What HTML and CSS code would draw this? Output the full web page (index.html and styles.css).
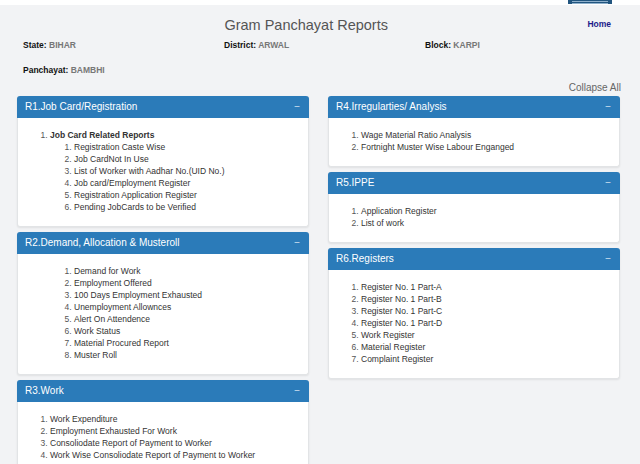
FILE: index.html
```html
<!DOCTYPE html>
<html lang="en">
<head>
    <meta charset="UTF-8">
    <meta name="viewport" content="width=device-width, initial-scale=1.0">
    <title>Gram Panchayat Reports</title>
    <link rel="stylesheet" href="styles.css">
</head>
<body>
    <!-- faixa do topo com o logo -->
    <div class="topbar">
        <div class="toplogo"><span></span><span></span></div>
    </div>

    <div class="container">
        <div class="header">
            <h1>Gram Panchayat Reports</h1>
            <a href="#" class="home">Home</a>
        </div>

        <div class="info">
            <div><b>State:</b> <span>BIHAR</span></div>
            <div><b>District:</b> <span>ARWAL</span></div>
            <div><b>Block:</b> <span>KARPI</span></div>
            <div><b>Panchayat:</b> <span>BAMBHI</span></div>
        </div>

        <div class="collapse-all">Collapse All</div>

        <div class="columns">
            <div class="col">
                <div class="panel">
                    <div class="panel-heading">R1.Job Card/Registration <span class="toggle">&minus;</span></div>
                    <div class="panel-body">
                        <ol>
                            <li><b>Job Card Related Reports</b>
                                <ol>
                                    <li>Registration Caste Wise</li>
                                    <li>Job CardNot In Use</li>
                                    <li>List of Worker with Aadhar No.(UID No.)</li>
                                    <li>Job card/Employment Register</li>
                                    <li>Registration Application Register</li>
                                    <li>Pending JobCards to be Verified</li>
                                </ol>
                            </li>
                        </ol>
                    </div>
                </div>

                <div class="panel">
                    <div class="panel-heading">R2.Demand, Allocation &amp; Musteroll <span class="toggle">&minus;</span></div>
                    <div class="panel-body">
                        <ol class="deep">
                            <li>Demand for Work</li>
                            <li>Employment Offered</li>
                            <li>100 Days Employment Exhausted</li>
                            <li>Unemployment Allownces</li>
                            <li>Alert On Attendence</li>
                            <li>Work Status</li>
                            <li>Material Procured Report</li>
                            <li>Muster Roll</li>
                        </ol>
                    </div>
                </div>

                <div class="panel">
                    <div class="panel-heading">R3.Work <span class="toggle">&minus;</span></div>
                    <div class="panel-body">
                        <ol>
                            <li>Work Expenditure</li>
                            <li>Employment Exhausted For Work</li>
                            <li>Consoliodate Report of Payment to Worker</li>
                            <li>Work Wise Consoliodate Report of Payment to Worker</li>
                        </ol>
                    </div>
                </div>
            </div>

            <div class="col">
                <div class="panel">
                    <div class="panel-heading">R4.Irregularties/ Analysis <span class="toggle">&minus;</span></div>
                    <div class="panel-body">
                        <ol>
                            <li>Wage Material Ratio Analysis</li>
                            <li>Fortnight Muster Wise Labour Enganged</li>
                        </ol>
                    </div>
                </div>

                <div class="panel">
                    <div class="panel-heading">R5.IPPE <span class="toggle">&minus;</span></div>
                    <div class="panel-body">
                        <ol>
                            <li>Application Register</li>
                            <li>List of work</li>
                        </ol>
                    </div>
                </div>

                <div class="panel">
                    <div class="panel-heading">R6.Registers <span class="toggle">&minus;</span></div>
                    <div class="panel-body">
                        <ol>
                            <li>Register No. 1 Part-A</li>
                            <li>Register No. 1 Part-B</li>
                            <li>Register No. 1 Part-C</li>
                            <li>Register No. 1 Part-D</li>
                            <li>Work Register</li>
                            <li>Material Register</li>
                            <li>Complaint Register</li>
                        </ol>
                    </div>
                </div>
            </div>
        </div>
    </div>
</body>
</html>
```

FILE: styles.css
```css
/* Estilos da pagina de relatorios */
body {
    margin: 0;
    padding: 0;
    background-color: #f2f3f5;
    font-family: "Liberation Sans", Arial, sans-serif;
    color: #333;
}

.topbar {
    height: 5px;
    background: #fff;
    display: flex;
    justify-content: flex-end;
    padding-right: 28px;
}

.toplogo {
    width: 44px;
    height: 4px;
    background: #22557f;
    display: flex;
    flex-direction: column;
    justify-content: space-around;
    padding: 0 4px;
    box-sizing: border-box;
}

.toplogo span {
    display: block;
    height: 1px;
    background: #8fb0cc;
}

.container {
    width: 603px;
    margin-left: 17px;
}

.header {
    display: flex;
    align-items: flex-start;
    margin-top: 11px;
}

h1 {
    flex: 1;
    margin: 0;
    padding-left: 8px;
    text-align: center;
    font-size: 14.5px;
    line-height: 18px;
    font-weight: normal;
    color: #555;
}

.home {
    margin: 2px 9px 0 0;
    font-size: 8.5px;
    line-height: 12px;
    font-weight: bold;
    color: #1b1b8a;
    text-decoration: none;
}

.info {
    display: grid;
    grid-template-columns: 201px 201px 201px;
    row-gap: 13px;
    margin-top: 5px;
    padding-left: 6px;
    font-size: 8.5px;
    line-height: 12px;
    font-weight: bold;
}

.info b {
    color: #111;
}

.info span {
    color: #777;
}

.collapse-all {
    margin-top: 6px;
    text-align: right;
    font-size: 10px;
    line-height: 12px;
    color: #666;
    margin-right: -1px;
}

.columns {
    display: grid;
    grid-template-columns: 292px 292px;
    column-gap: 19px;
    margin-top: 2px;
}

.panel {
    background: #fff;
    border: 1px solid #e2e4e6;
    border-top: none;
    border-radius: 3px;
    box-shadow: 0 1px 2px rgba(0,0,0,0.08);
    margin-bottom: 5px;
}

.panel-heading {
    display: flex;
    justify-content: space-between;
    height: 22px;
    line-height: 22px;
    padding: 0 9px 0 8px;
    margin: 0 -1px;
    background-color: #2b7bb9;
    color: #fff;
    font-size: 10px;
    border-radius: 3px 3px 0 0;
}

.toggle {
    color: #d3e3f1;
    font-size: 10px;
}

.panel-body {
    padding: 11px 0 13px 0;
    font-size: 8.5px;
    line-height: 12px;
}

.panel-body ol {
    margin: 0;
    padding-left: 32px;
}

.panel-body ol ol {
    padding-left: 24px;
}

.panel-body ol.deep {
    padding-left: 56px;
}

.panel-body li::marker {
    color: #555;
}
```
